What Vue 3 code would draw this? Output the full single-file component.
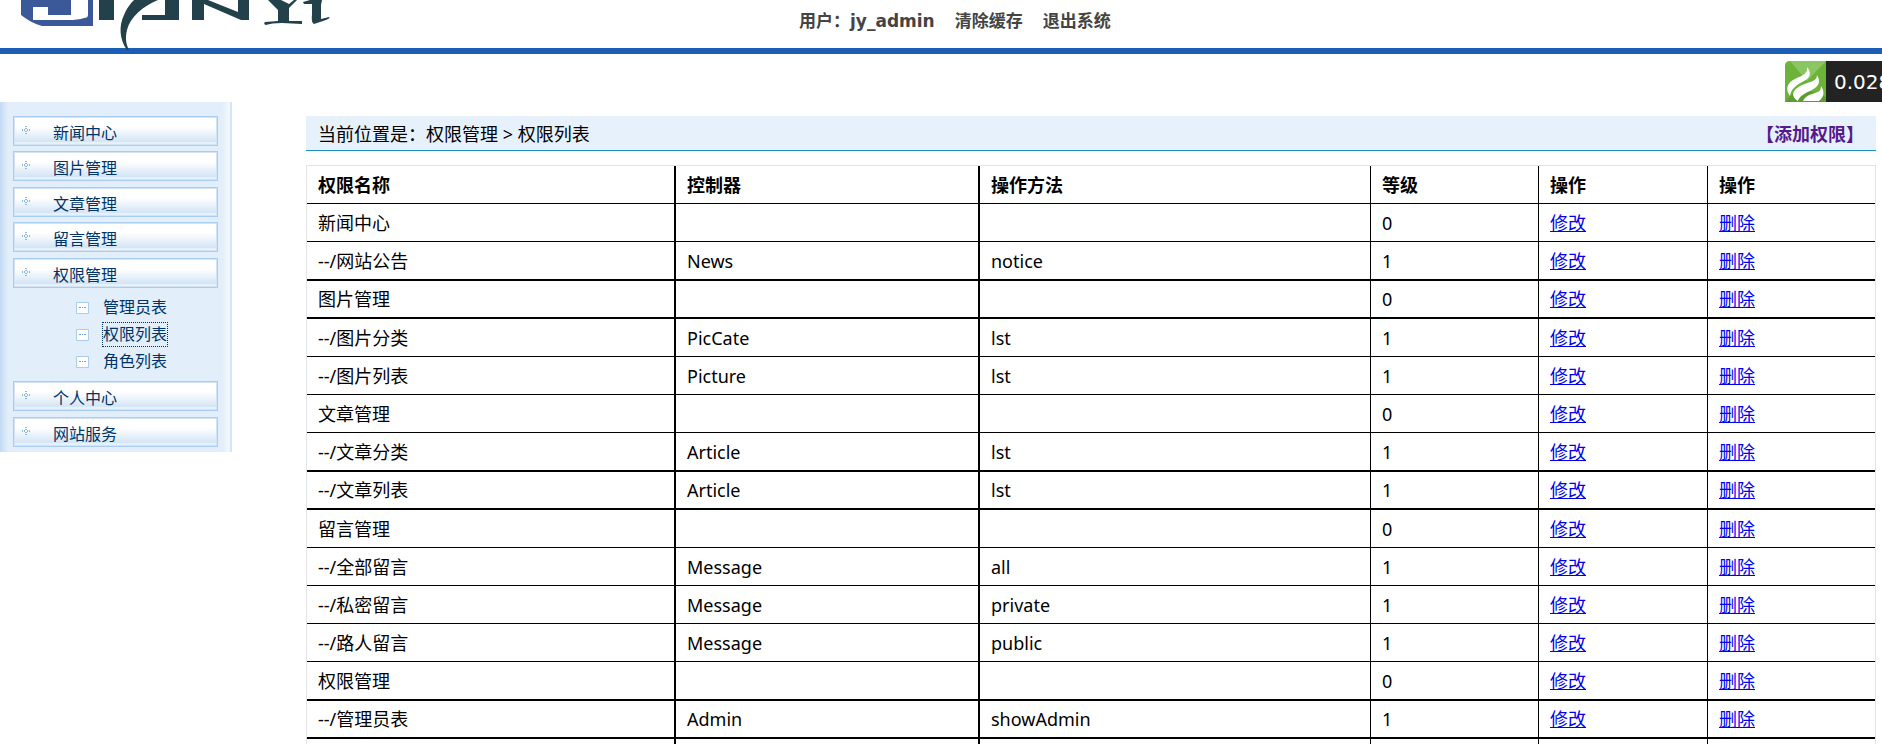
<template>
    <div class="page">
        <header class="header">
            <svg class="logo" width="340" height="52" viewBox="0 0 340 52" role="img" aria-label="JIANYI">
                <path fill="#3b5998" d="M21 0H93V26H42C35 24 27 20 21 15Z" />
                <path fill="#fff" d="M33 7H48V15H71V0H88V15Q88 18 84 18Q78 20 68 20H33Z" />
                <g fill="#23414a">
                    <path d="M99 0H114V20H99Z" />
                    <path d="M134 0H158C143 6 130 17 127 30C125 38 126 44 129 50L127 50C119 39 119 25 124 15C127 8 130 4 134 0Z" />
                    <path d="M165 0H179V20H142V15H165Z" />
                    <path d="M192 0H208L238 12V0H249V20H241L204 4V20H192Z" />
                    <path d="M268 0H281L289 4L294 0H297L289 8V21L302 21V24L282 23Q271 23 266 25Q263 24 265 22L278 21V10Z" />
                    <path d="M303 2L310 0H322L321 5V19L329 17Q331 18 326 20L314 24Q311 23 312 14V4L304 4Z" />
                </g>
            </svg>
            <nav class="user-nav">
                <span>用户：jy_admin</span>
                <a href="#">清除缓存</a>
                <a href="#">退出系统</a>
            </nav>
        </header>

        <div class="body">
            <aside class="sidebar">
                <template v-for="menu in menus" :key="menu.name">
                    <button class="menu" type="button">
                        <svg class="plus" width="8" height="8" viewBox="0 0 8 8" fill="#8ab9e8">
                            <path d="M3 0h2v1H3zM3 2h2v1H3zM3 5h2v1H3zM3 7h2v1H3zM0 3h1v2H0zM2 3h1v2H2zM5 3h1v2H5zM7 3h1v2H7z" />
                        </svg>
                        {{ menu.name }}
                    </button>
                    <ul v-if="menu.children" class="submenu">
                        <li v-for="child in menu.children" :key="child">
                            <svg width="13" height="12" viewBox="0 0 13 12">
                                <path fill="#fff" stroke="#a9cdf0" d="M.5 .5h12v11H.5z" />
                                <path fill="#6fa5e0" d="M3 5h2v1H3zM6 5h1v1H6zM8 5h2v1H8z" />
                            </svg>
                            <a href="#" :class="{ active: child === current }">{{ child }}</a>
                        </li>
                    </ul>
                </template>
            </aside>

            <main class="content">
                <div class="position">
                    <span>当前位置是：权限管理 &gt; 权限列表</span>
                    <a href="#">【添加权限】</a>
                </div>
                <table class="list">
                    <colgroup>
                        <col class="col-name" />
                        <col class="col-controller" />
                        <col class="col-action" />
                        <col class="col-level" />
                        <col class="col-edit" />
                        <col />
                    </colgroup>
                    <thead>
                        <tr>
                            <th>权限名称</th>
                            <th>控制器</th>
                            <th>操作方法</th>
                            <th>等级</th>
                            <th>操作</th>
                            <th>操作</th>
                        </tr>
                    </thead>
                    <tbody>
                        <tr v-for="(row, index) in rows" :key="index" :class="{ thick: row.thick }">
                            <td>{{ row.name }}</td>
                            <td>{{ row.controller }}</td>
                            <td>{{ row.action }}</td>
                            <td>{{ row.controller ? 1 : 0 }}</td>
                            <td><a href="#">修改</a></td>
                            <td><a href="#">删除</a></td>
                        </tr>
                    </tbody>
                    <tfoot>
                        <tr>
                            <td v-for="n in 6" :key="n"></td>
                        </tr>
                    </tfoot>
                </table>
            </main>
        </div>

        <div class="trace">
            <svg width="41" height="41" viewBox="0 0 41 41">
                <path fill="#6db33a" d="M5 0H41V41H0V5Q0 0 5 0Z" />
                <path fill="#8bc662" d="M5 0H41L22 20Z" />
                <path fill="#5a9e2e" d="M0 41L14 26L41 36V41Z" />
                <g fill="#fff">
                    <path d="M22 6C27 12 25 17 19 20C11 24 6 28 5 35C0 28 2 22 10 18C18 14 23 13 22 6Z" />
                    <path d="M32 14C36 21 34 25 27 29C18 33 14 36 13 40C4 34 9 28 17 24C27 20 32 20 32 14Z" />
                    <path d="M36 25C40 31 39 36 34 40H18C20 36 23 34 27 33C34 31 36 30 36 25Z" />
                </g>
            </svg>
            <span>0.028s</span>
        </div>
    </div>
</template>

<script setup>
import { ref } from 'vue';

const current = ref('权限列表');

const menus = [
    { name: '新闻中心' },
    { name: '图片管理' },
    { name: '文章管理' },
    { name: '留言管理' },
    { name: '权限管理', children: ['管理员表', '权限列表', '角色列表'] },
    { name: '个人中心' },
    { name: '网站服务' },
];

const rows = [
    { name: '新闻中心' },
    { name: '--/网站公告', controller: 'News', action: 'notice', thick: true },
    { name: '图片管理', thick: true },
    { name: '--/图片分类', controller: 'PicCate', action: 'lst' },
    { name: '--/图片列表', controller: 'Picture', action: 'lst' },
    { name: '文章管理' },
    { name: '--/文章分类', controller: 'Article', action: 'lst', thick: true },
    { name: '--/文章列表', controller: 'Article', action: 'lst', thick: true },
    { name: '留言管理' },
    { name: '--/全部留言', controller: 'Message', action: 'all' },
    { name: '--/私密留言', controller: 'Message', action: 'private' },
    { name: '--/路人留言', controller: 'Message', action: 'public' },
    { name: '权限管理', thick: true },
    { name: '--/管理员表', controller: 'Admin', action: 'showAdmin', thick: true },
];
</script>

<style>
body {
    margin: 0;
    background: #fff;
}

html {
    height: 100%;
    overflow: hidden;
}
</style>

<style scoped>
.page {
    height: 100vh;
    overflow: hidden;
    font-family: 'Noto Sans', 'Noto Sans CJK SC', sans-serif;
    font-size: 18px;
    color: #000;
}

.header {
    display: flex;
    height: 48px;
    border-bottom: 6px solid #1c5db6;
}

.logo {
    position: relative;
    flex: none;
}

.user-nav {
    display: flex;
    gap: 20px;
    margin-left: 459px;
    font-family: 'DejaVu Sans', 'Noto Sans CJK SC', sans-serif;
    font-size: 17px;
    font-weight: bold;
    line-height: 42px;
    color: #444;
}

.user-nav a {
    color: inherit;
    text-decoration: none;
}

.body {
    display: flex;
    align-items: flex-start;
    padding-top: 48px;
}

.sidebar {
    flex: none;
    box-sizing: border-box;
    width: 232px;
    padding: 14px 12px 0 13px;
    border-right: 2px solid #d2e6f8;
    background: linear-gradient(to right, #c3daf3, #e2eefa 8px, #e2eefa 222px, #f3f8fe 230px);
}

.menu {
    display: flex;
    align-items: center;
    box-sizing: border-box;
    width: 100%;
    height: 30px;
    margin-bottom: 5px;
    padding: 2px 0 0 8px;
    border: 1px solid #a9cdf0;
    background: linear-gradient(#fff 35%, #d2e4f6 90%, #e6f1fb 90%);
    box-shadow: inset 0 0 0 1px #d2e4f6;
    font-family: inherit;
    font-size: 16px;
    color: #003366;
}

.menu:nth-of-type(even) {
    margin-bottom: 6px;
}

.plus {
    margin: 0 23px 4px 0;
}

.submenu {
    margin: 0;
    padding: 1px 0 6px 63px;
    list-style: none;
    font-size: 16px;
}

.submenu li {
    display: flex;
    align-items: center;
    gap: 13px;
    height: 27px;
}

.submenu a {
    line-height: 23px;
    border: 1px solid transparent;
    color: #003366;
    text-decoration: none;
}

.submenu a.active {
    border: 1px dotted #003366;
}

.content {
    flex: 1;
    margin: 14px 6px 0 74px;
}

.position {
    display: flex;
    justify-content: space-between;
    height: 34px;
    padding: 0 12px;
    border-bottom: 1px solid #1e90c0;
    background: #e7f1fc;
    line-height: 36px;
}

.position a {
    font-weight: bold;
    color: #551a8b;
    text-decoration: none;
}

.list {
    width: 100%;
    margin-top: 14px;
    border: 1px solid #e2e4e8;
    border-collapse: separate;
    border-spacing: 0;
    table-layout: fixed;
}

.col-name {
    width: 369px;
}

.col-controller {
    width: 304px;
}

.col-action {
    width: 391px;
}

.col-level {
    width: 168px;
}

.col-edit {
    width: 169px;
}

.list th,
.list td {
    box-sizing: border-box;
    height: 38px;
    padding: 0 11px;
    border-right: 1px solid #000;
    border-bottom: 1px solid #000;
    line-height: 36px;
    text-align: left;
}

.list th {
    padding-top: 1px;
}

.list th:nth-child(-n + 2),
.list td:nth-child(-n + 2) {
    border-right-width: 2px;
}

.list th:last-child,
.list td:last-child {
    border-right: 0;
}

.list .thick td {
    height: 39px;
    border-bottom-width: 2px;
}

.list .thick + .thick td {
    height: 38px;
}

.list a {
    color: #00e;
}

.trace {
    position: absolute;
    top: 61px;
    right: 0;
    display: flex;
    width: 97px;
    overflow: hidden;
    background: #232323;
    font-family: 'DejaVu Sans', sans-serif;
    font-size: 20px;
    line-height: 42px;
    color: #fff;
}

.trace svg {
    flex: none;
    height: 41px;
    background: #fff;
}

.trace span {
    height: 41px;
    padding-left: 8px;
    white-space: nowrap;
}
</style>
